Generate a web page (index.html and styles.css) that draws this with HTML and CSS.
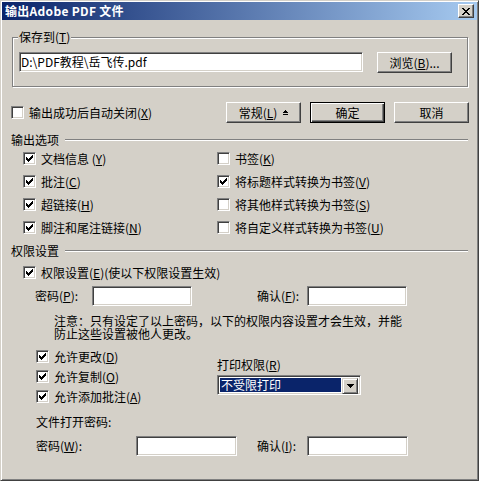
FILE: index.html
```html
<!DOCTYPE html>
<html lang="zh-CN">
<head>
<meta charset="utf-8">
<title>输出Adobe PDF 文件</title>
<link rel="stylesheet" href="styles.css">
</head>
<body>
<div class="window">
  <div class="titlebar">
    <span class="title">输出Adobe PDF 文件</span>
    <span class="close"><svg width="8" height="7" viewBox="0 0 8 7" shape-rendering="crispEdges"><path d="M0 0h2v1h-2z M1 1h2v1h-2z M2 2h4v1h-4z M3 3h2v1h-2z M2 4h4v1h-4z M1 5h2v1h-2z M0 6h2v1h-2z M6 0h2v1h-2z M5 1h2v1h-2z M5 5h2v1h-2z M6 6h2v1h-2z" fill="#000"/></svg></span>
  </div>
  <div class="content">
    <div class="group">
      <span class="group-label">保存到(<u>T</u>)</span>
      <div class="path-row">
        <div class="field path">D:\PDF教程\岳飞传.pdf</div>
        <div class="btn browse">浏览(<u>B</u>)...</div>
      </div>
    </div>

    <div class="action-row">
      <div class="check"><span class="cb"></span><span class="lbl">输出成功后自动关闭(<u>X</u>)</span></div>
      <div class="buttons">
        <div class="btn">常规(<u>L</u>)<svg class="collapse" width="5" height="6" viewBox="0 0 5 6" shape-rendering="crispEdges"><path d="M2 0h1v1h-1z M1 1h3v1h-3z M0 2h5v1h-5z M0 4h5v1h-5z" fill="#000"/></svg></div>
        <div class="btn default">确定</div>
        <div class="btn">取消</div>
      </div>
    </div>

    <div class="section-head"><span>输出选项</span><span class="rule"></span></div>
    <div class="options">
      <div class="check"><span class="cb on"><svg width="7" height="7" viewBox="0 0 7 7" shape-rendering="crispEdges"><path d="M0 2h1v3h-1z M1 3h1v3h-1z M2 4h1v3h-1z M3 3h1v3h-1z M4 2h1v3h-1z M5 1h1v3h-1z M6 0h1v3h-1z" fill="#000"/></svg></span><span class="lbl">文档信息 (<u>Y</u>)</span></div>
      <div class="check"><span class="cb"></span><span class="lbl">书签(<u>K</u>)</span></div>
      <div class="check"><span class="cb on"><svg width="7" height="7" viewBox="0 0 7 7" shape-rendering="crispEdges"><path d="M0 2h1v3h-1z M1 3h1v3h-1z M2 4h1v3h-1z M3 3h1v3h-1z M4 2h1v3h-1z M5 1h1v3h-1z M6 0h1v3h-1z" fill="#000"/></svg></span><span class="lbl">批注(<u>C</u>)</span></div>
      <div class="check"><span class="cb on"><svg width="7" height="7" viewBox="0 0 7 7" shape-rendering="crispEdges"><path d="M0 2h1v3h-1z M1 3h1v3h-1z M2 4h1v3h-1z M3 3h1v3h-1z M4 2h1v3h-1z M5 1h1v3h-1z M6 0h1v3h-1z" fill="#000"/></svg></span><span class="lbl">将标题样式转换为书签(<u>V</u>)</span></div>
      <div class="check"><span class="cb on"><svg width="7" height="7" viewBox="0 0 7 7" shape-rendering="crispEdges"><path d="M0 2h1v3h-1z M1 3h1v3h-1z M2 4h1v3h-1z M3 3h1v3h-1z M4 2h1v3h-1z M5 1h1v3h-1z M6 0h1v3h-1z" fill="#000"/></svg></span><span class="lbl">超链接(<u>H</u>)</span></div>
      <div class="check"><span class="cb"></span><span class="lbl">将其他样式转换为书签(<u>S</u>)</span></div>
      <div class="check"><span class="cb on"><svg width="7" height="7" viewBox="0 0 7 7" shape-rendering="crispEdges"><path d="M0 2h1v3h-1z M1 3h1v3h-1z M2 4h1v3h-1z M3 3h1v3h-1z M4 2h1v3h-1z M5 1h1v3h-1z M6 0h1v3h-1z" fill="#000"/></svg></span><span class="lbl">脚注和尾注链接(<u>N</u>)</span></div>
      <div class="check"><span class="cb"></span><span class="lbl">将自定义样式转换为书签(<u>U</u>)</span></div>
    </div>

    <div class="section-head perm-head"><span>权限设置</span><span class="rule"></span></div>
    <div class="check perm-check"><span class="cb on"><svg width="7" height="7" viewBox="0 0 7 7" shape-rendering="crispEdges"><path d="M0 2h1v3h-1z M1 3h1v3h-1z M2 4h1v3h-1z M3 3h1v3h-1z M4 2h1v3h-1z M5 1h1v3h-1z M6 0h1v3h-1z" fill="#000"/></svg></span><span class="lbl">权限设置(<u>E</u>)(使以下权限设置生效)</span></div>

    <div class="pwd-row">
      <span class="pwd-label">密码(<u>P</u>):</span>
      <div class="field pwd"></div>
      <span class="confirm-label">确认(<u>F</u>):</span>
      <div class="field pwd"></div>
    </div>

    <p class="note">注意：只有设定了以上密码，以下的权限内容设置才会生效，并能<br>防止这些设置被他人更改。</p>

    <div class="lower">
      <div class="allow-col">
        <div class="check"><span class="cb on"><svg width="7" height="7" viewBox="0 0 7 7" shape-rendering="crispEdges"><path d="M0 2h1v3h-1z M1 3h1v3h-1z M2 4h1v3h-1z M3 3h1v3h-1z M4 2h1v3h-1z M5 1h1v3h-1z M6 0h1v3h-1z" fill="#000"/></svg></span><span class="lbl">允许更改(<u>D</u>)</span></div>
        <div class="check"><span class="cb on"><svg width="7" height="7" viewBox="0 0 7 7" shape-rendering="crispEdges"><path d="M0 2h1v3h-1z M1 3h1v3h-1z M2 4h1v3h-1z M3 3h1v3h-1z M4 2h1v3h-1z M5 1h1v3h-1z M6 0h1v3h-1z" fill="#000"/></svg></span><span class="lbl">允许复制(<u>O</u>)</span></div>
        <div class="check"><span class="cb on"><svg width="7" height="7" viewBox="0 0 7 7" shape-rendering="crispEdges"><path d="M0 2h1v3h-1z M1 3h1v3h-1z M2 4h1v3h-1z M3 3h1v3h-1z M4 2h1v3h-1z M5 1h1v3h-1z M6 0h1v3h-1z" fill="#000"/></svg></span><span class="lbl">允许添加批注(<u>A</u>)</span></div>
      </div>
      <div class="print-col">
        <div class="print-label">打印权限(<u>R</u>)</div>
        <div class="select">
          <span class="select-value">不受限打印</span>
          <span class="select-btn"><svg width="7" height="4" viewBox="0 0 7 4" shape-rendering="crispEdges"><path d="M0 0h7v1h-7z M1 1h5v1h-5z M2 2h3v1h-3z M3 3h1v1h-1z" fill="#000"/></svg></span>
        </div>
      </div>
    </div>

    <div class="open-label">文件打开密码:</div>
    <div class="pwd-row pwd-row2">
      <span class="pwd-label wide">密码(<u>W</u>):</span>
      <div class="field pwd w101"></div>
      <span class="confirm-label">确认(<u>I</u>):</span>
      <div class="field pwd w101"></div>
    </div>
  </div>
</div>
</body>
</html>
```

FILE: styles.css
```css
* { box-sizing: border-box; }
html, body { margin: 0; padding: 0; }
body {
  width: 479px;
  height: 481px;
  overflow: hidden;
  background: #d4d0c8;
  font-family: "Noto Sans CJK SC", "Liberation Sans", sans-serif;
  font-size: 12px;
  line-height: 12px;
  color: #000;
}
u { text-decoration: underline; text-underline-offset: 1px; }

.window {
  width: 479px;
  height: 481px;
  background: #d4d0c8;
  border: 1px solid;
  border-color: #d4d0c8 #404040 #404040 #d4d0c8;
  box-shadow: inset 1px 1px #fff, inset -1px -1px #808080;
  padding: 1px;
}

.titlebar {
  height: 18px;
  display: flex;
  align-items: center;
  justify-content: space-between;
  padding: 0 3px 0 3px;
  background: linear-gradient(to right, #0a246a, #a6caf0);
}
.title { color: #fff; font-weight: bold; letter-spacing: 0.3px; }
.close {
  width: 16px;
  height: 14px;
  display: flex;
  align-items: center;
  justify-content: center;
  background: #d4d0c8;
  border: 1px solid;
  border-color: #fff #404040 #404040 #fff;
  box-shadow: inset -1px -1px #808080;
}

.content { padding: 0 8px 0 9px; }

.field {
  background: #fff;
  border: 1px solid;
  border-color: #808080 #fff #fff #808080;
  box-shadow: inset 1px 1px #404040, inset -1px -1px #d4d0c8;
}

.btn {
  width: 75px;
  height: 21px;
  display: flex;
  align-items: center;
  justify-content: center;
  background: #d4d0c8;
  border: 1px solid;
  border-color: #fff #404040 #404040 #fff;
  box-shadow: inset -1px -1px #808080;
}
.btn.default {
  border-color: #000;
  box-shadow: inset 1px 1px #fff, inset -1px -1px #404040, inset -2px -2px #808080;
}
.collapse { margin-left: 6px; }

.group {
  position: relative;
  margin: 17px 1px 0 1px;
  height: 50px;
  border: 1px solid #808080;
  box-shadow: inset 1px 1px #fff, 1px 1px #fff;
  padding: 14px 0 0 6px;
}
.group-label {
  position: absolute;
  top: -7px;
  left: 5px;
  padding: 0 1px;
  background: #d4d0c8;
}
.path-row { display: flex; align-items: flex-start; }
.path {
  width: 344px;
  height: 20px;
  padding-left: 1px;
  display: flex;
  align-items: center;
}
.browse { margin-left: 14px; }

.action-row {
  margin-top: 15px;
  height: 21px;
  display: flex;
  align-items: center;
}
.buttons { margin-left: auto; display: flex; gap: 9px; }

.check { display: flex; align-items: center; height: 13px; }
.cb {
  flex: none;
  width: 13px;
  height: 13px;
  background: #fff;
  border: 1px solid;
  border-color: #808080 #fff #fff #808080;
  box-shadow: inset 1px 1px #404040, inset -1px -1px #d4d0c8;
  display: flex;
  align-items: center;
  justify-content: center;
}
.cb svg { display: block; }
.lbl { margin-left: 5px; white-space: nowrap; }

.section-head {
  margin-top: 11px;
  display: flex;
  align-items: center;
  height: 12px;
}
.rule {
  flex: 1;
  height: 2px;
  margin: 0 1px 0 6px;
  border-top: 1px solid #808080;
  border-bottom: 1px solid #fff;
}

.options {
  margin-top: 6px;
  padding-left: 12px;
  display: grid;
  grid-template-columns: 194px 1fr;
  row-gap: 10px;
}

.perm-check { margin-top: 9px; padding-left: 12px; }

.pwd-row {
  margin-top: 7px;
  padding-left: 24px;
  height: 20px;
  display: flex;
  align-items: center;
}
.pwd-label { width: 57px; }
.pwd-label.wide { width: 100px; }
.pwd { width: 100px; height: 20px; }
.pwd.w101 { width: 101px; }
.confirm-label { width: 50px; margin-left: 65px; }
.pwd-row2 { margin-top: 8px; padding-left: 25px; }
.pwd-row2 .confirm-label { margin-left: 20px; }

.note {
  margin: 8px 0 0 0;
  padding-left: 43px;
  line-height: 13px;
}

.lower { margin-top: 10px; display: flex; align-items: flex-start; }
.allow-col {
  width: 206px;
  padding-left: 25px;
  display: flex;
  flex-direction: column;
  gap: 7px;
}
.print-col { display: flex; flex-direction: column; }
.print-label { margin-top: 9px; }
.select {
  margin-top: 4px;
  width: 144px;
  height: 20px;
  background: #fff;
  border: 1px solid;
  border-color: #808080 #fff #fff #808080;
  box-shadow: inset 1px 1px #404040, inset -1px -1px #d4d0c8;
  padding: 2px;
  display: flex;
}
.select-value {
  flex: 1;
  margin: 0 1px 0 0;
  padding-left: 1px;
  background: #0a246a;
  color: #fff;
  display: flex;
  align-items: center;
}
.select-btn {
  width: 16px;
  height: 16px;
  display: flex;
  align-items: center;
  justify-content: center;
  background: #d4d0c8;
  border: 1px solid;
  border-color: #d4d0c8 #404040 #404040 #d4d0c8;
  box-shadow: inset 1px 1px #fff, inset -1px -1px #808080;
}

.open-label { margin-top: 13px; padding-left: 25px; }
```
